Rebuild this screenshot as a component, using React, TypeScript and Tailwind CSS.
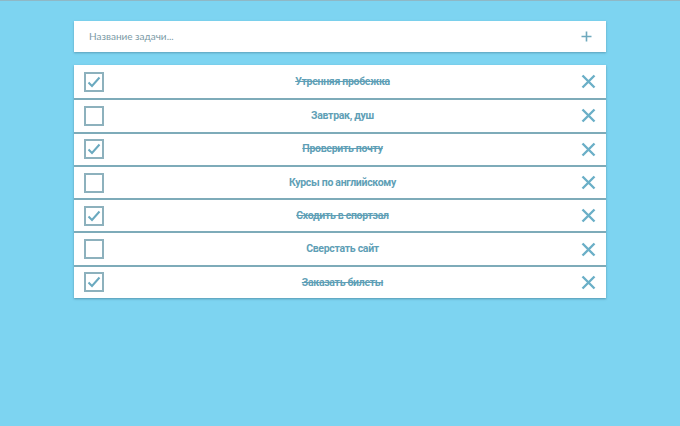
import React from "react";

const tasks = [
  { t: "Утренняя пробежка", done: true },
  { t: "Завтрак, душ", done: false },
  { t: "Проверить почту", done: true },
  { t: "Курсы по английскому", done: false },
  { t: "Сходить в спортзал", done: true },
  { t: "Сверстать сайт", done: false },
  { t: "Заказать билеты", done: true },
];

export default function App() {
  return (
    <div
      className="w-[680px] h-[426px] bg-[#7dd4f1] flex flex-col items-center pt-[20px] border-t border-[#8fb8c6]"
      style={{ fontFamily: 'Lato, "Noto Sans", sans-serif' }}
    >
      <div className="w-[532px] h-[31px] bg-white flex items-center justify-between pl-[15px] pr-[14px] shadow-[0_1px_2px_rgba(60,110,130,0.5)]">
        <span className="text-[10px] text-[#7b9aa6]">Название задачи...</span>
        <svg width="11" height="11" viewBox="0 0 11 11">
          <path d="M5.5 0.5V10.5M0.5 5.5H10.5" stroke="#6ea9bd" strokeWidth="1.6" />
        </svg>
      </div>
      <div className="mt-[13px] w-[532px] bg-white flex flex-col shadow-[0_1px_2px_rgba(60,110,130,0.6)]">
        {tasks.map((task, i) => (
          <div
            key={i}
            className={`h-[33.3px] flex items-center px-[10px] ${i > 0 ? "border-t-2 border-[#7eabb9]" : ""}`}
          >
            <div className="w-[20px] h-[20px] border-2 border-[#8db1bd] flex items-center justify-center">
              {task.done && (
                <svg width="14" height="12" viewBox="0 0 14 12">
                  <path d="M1.5 6.5L5 10L12.5 1.5" stroke="#6aa9bf" strokeWidth="2" fill="none" />
                </svg>
              )}
            </div>
            <div
              className={`flex-1 text-center text-[10.5px] tracking-[-0.3px] font-bold text-[#5f9fb6] ${task.done ? "line-through" : ""}`}
              style={{ fontFamily: 'Roboto, "Noto Sans", sans-serif' }}
            >
              {task.t}
            </div>
            <svg width="15" height="15" viewBox="0 0 15 15">
              <path d="M1.5 1.5L13.5 13.5M13.5 1.5L1.5 13.5" stroke="#6bafc7" strokeWidth="2.4" />
            </svg>
          </div>
        ))}
      </div>
    </div>
  );
}
